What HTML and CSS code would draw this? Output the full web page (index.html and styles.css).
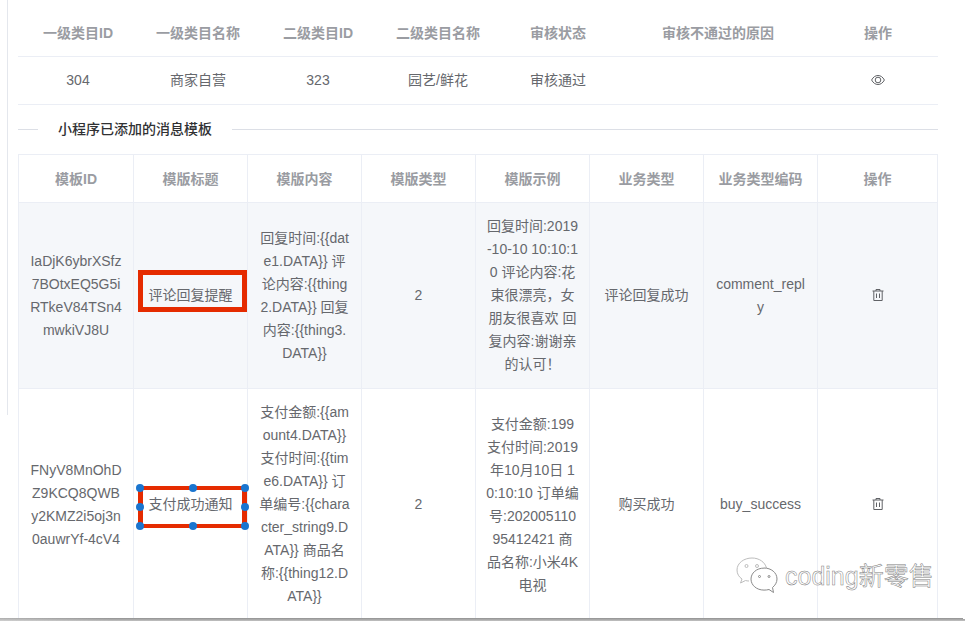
FILE: index.html
```html
<!DOCTYPE html>
<html lang="zh-CN">
<head>
<meta charset="utf-8">
<title>小程序消息模板</title>
<link rel="stylesheet" href="styles.css">
</head>
<body>
<div class="page">
  <table class="tbl tbl-plain">
    <colgroup><col class="c120"><col class="c120"><col class="c120"><col class="c120"><col class="c120"><col class="c200"><col class="c120"></colgroup>
    <thead><tr><th>一级类目ID</th><th>一级类目名称</th><th>二级类目ID</th><th>二级类目名称</th><th>审核状态</th><th>审核不通过的原因</th><th>操作</th></tr></thead>
    <tbody><tr><td>304</td><td>商家自营</td><td>323</td><td>园艺/鲜花</td><td>审核通过</td><td></td><td>
      <svg class="ico" width="14" height="14" viewBox="0 0 14 14" fill="none" stroke="#606266" stroke-width="1"><path d="M.6 7C2.2 4 4.4 2.500 7 2.500S11.800 4 13.400 7C11.800 10 9.600 11.500 7 11.500S2.200 10 .6 7z"/><circle cx="7" cy="7" r="2.800"/></svg>
    </td></tr></tbody>
  </table>

  <div class="divider"><span class="divider-line divider-short"></span><span class="divider-text">小程序已添加的消息模板</span><span class="divider-line divider-long"></span></div>

  <table class="tbl tbl-border">
    <colgroup><col class="c115"><col class="c114"><col class="c114"><col class="c114"><col class="c114"><col class="c114"><col class="c114"><col class="c120"></colgroup>
    <thead><tr><th>模板ID</th><th>模版标题</th><th>模版内容</th><th>模版类型</th><th>模版示例</th><th>业务类型</th><th>业务类型编码</th><th>操作</th></tr></thead>
    <tbody>
      <tr class="striped">
        <td>IaDjK6ybrXSfz7BOtxEQ5G5iRTkeV84TSn4mwkiVJ8U</td>
        <td>评论回复提醒</td>
        <td>回复时间:{{date1.DATA}} 评论内容:{{thing2.DATA}} 回复内容:{{thing3.DATA}}</td>
        <td>2</td>
        <td>回复时间:2019-10-10 10:10:10 评论内容:花束很漂亮，女朋友很喜欢 回复内容:谢谢亲的认可！</td>
        <td>评论回复成功</td>
        <td>comment_reply</td>
        <td><svg class="ico" width="14" height="14" viewBox="0 0 14 14" fill="none" stroke="#606266" stroke-width="1"><path d="M1.500 3h11M5 3V1.500h4V3M2.800 3v9.500h8.400V3M5.500 5.500v4.500M8.500 5.500v4.500"/></svg></td>
      </tr>
      <tr>
        <td>FNyV8MnOhDZ9KCQ8QWBy2KMZ2i5oj3n0auwrYf-4cV4</td>
        <td>支付成功通知</td>
        <td>支付金额:{{amount4.DATA}} 支付时间:{{time6.DATA}} 订单编号:{{character_string9.DATA}} 商品名称:{{thing12.DATA}}</td>
        <td>2</td>
        <td>支付金额:199 支付时间:2019年10月10日 10:10:10 订单编号:20200511095412421 商品名称:小米4K电视</td>
        <td>购买成功</td>
        <td>buy_success</td>
        <td><svg class="ico" width="14" height="14" viewBox="0 0 14 14" fill="none" stroke="#606266" stroke-width="1"><path d="M1.500 3h11M5 3V1.500h4V3M2.800 3v9.500h8.400V3M5.500 5.500v4.500M8.500 5.500v4.500"/></svg></td>
      </tr>
    </tbody>
  </table>
</div>

<div class="side-line"></div>
<div class="mark mark-first"></div>
<div class="mark mark-second">
  <i class="dot d1"></i><i class="dot d2"></i><i class="dot d3"></i><i class="dot d4"></i><i class="dot d5"></i><i class="dot d6"></i><i class="dot d7"></i><i class="dot d8"></i>
</div>
<div class="watermark">
  <svg width="42" height="38" viewBox="0 0 42 38" fill="none" stroke-width="1">
    <g stroke="#bdbdbd">
      <path d="M16 1C8 1 1 6 1 13c0 4 2 7 5 9l-1.500 4 5-2.500c1 .3 2 .5 3.500 .5"/>
      <path d="M16 1c7 0 13 4 14.500 10"/>
      <circle cx="10.500" cy="9" r="1.500"/><circle cx="21" cy="9" r="1.500"/>
    </g>
    <g stroke="#8a8a8a">
      <path d="M28 11c7 0 13 4.500 13 11 0 3.500-2 6.500-4.500 8.500l1 5-4.500-3c-1.500 .4-3 .6-5 .6-7.500 0-13-5-13-11s5.500-11 13-11z"/>
      <circle cx="23.500" cy="19.500" r="1"/><circle cx="33" cy="19.500" r="1"/>
    </g>
  </svg>
  <span class="watermark-text">coding新零售</span>
</div>
<div class="bottom-edge"></div>
</body>
</html>
```
FILE: styles.css
```css
html, body {
  margin: 0;
  height: 621px;
  overflow: hidden;
  background: #fff;
}
body {
  position: relative;
  font-family: "Liberation Sans", "Noto Sans CJK SC", sans-serif;
  font-size: 14px;
  color: #66686d;
}
.page {
  width: 920px;
  padding: 9px 27px 0 18px;
}
.tbl {
  width: 100%;
  table-layout: fixed;
  border-collapse: separate;
  border-spacing: 0;
  line-height: 23px;
}
.c120 { width: 120px; }
.c200 { width: 200px; }
.c115 { width: 115px; }
.c114 { width: 114px; }
.tbl th, .tbl td {
  padding: 12px 10px;
  text-align: center;
  word-break: break-all;
  border-bottom: 1px solid #ebeef5;
}
.tbl th {
  padding: 13px 10px 11px;
  color: #9a9ca2;
  font-weight: 700;
}
.tbl-border {
  border-top: 1px solid #ebeef5;
  border-left: 1px solid #ebeef5;
}
.tbl-border th, .tbl-border td { border-right: 1px solid #ebeef5; }
.striped td { background: #f5f7fa; }
.ico {
  display: inline-block;
  vertical-align: middle;
  margin-bottom: 2px;
}
.divider {
  display: flex;
  align-items: center;
  margin: 24px 0;
  height: 1px;
}
.divider-line { height: 1px; background: #dcdfe6; }
.divider-short { width: 20px; }
.divider-long { flex: 1; }
.divider-text {
  padding: 0 20px 4px;
  color: #303133;
  font-weight: 500;
  white-space: nowrap;
}
.side-line {
  position: absolute;
  left: 7px;
  top: 0;
  width: 1px;
  height: 415px;
  background: #e4e7ed;
}
.mark {
  position: absolute;
  left: 138px;
  width: 109px;
  height: 42px;
  box-sizing: border-box;
  border: 5px solid #e52b00;
}
.mark-first { top: 270px; }
.mark-second { top: 486px; border-width: 4px 5px; }
.dot {
  position: absolute;
  width: 8px;
  height: 8px;
  border-radius: 50%;
  background: #1a75cf;
}
.d1 { left: -7px; top: -6px; }
.d2 { left: 46px; top: -6px; }
.d3 { left: 98px; top: -6px; }
.d4 { left: -7px; top: 13px; }
.d5 { left: 98px; top: 13px; }
.d6 { left: -7px; top: 32px; }
.d7 { left: 46px; top: 32px; }
.d8 { left: 98px; top: 32px; }
.watermark {
  position: absolute;
  left: 736px;
  top: 557px;
  display: flex;
  align-items: center;
  gap: 7px;
}
.watermark-text {
  font-size: 25px;
  line-height: 38px;
  color: #fff;
  -webkit-text-stroke: .5px #7d7d7d;
}
.bottom-edge {
  position: absolute;
  left: 0;
  right: 0;
  bottom: 0;
  height: 3px;
  background:
    linear-gradient(#fff, #fff) right top / 2px 1px no-repeat,
    linear-gradient(to right, rgba(255, 255, 255, .25), rgba(255, 255, 255, 0) 112px),
    linear-gradient(#919191, #c2c2c2);
}
```
